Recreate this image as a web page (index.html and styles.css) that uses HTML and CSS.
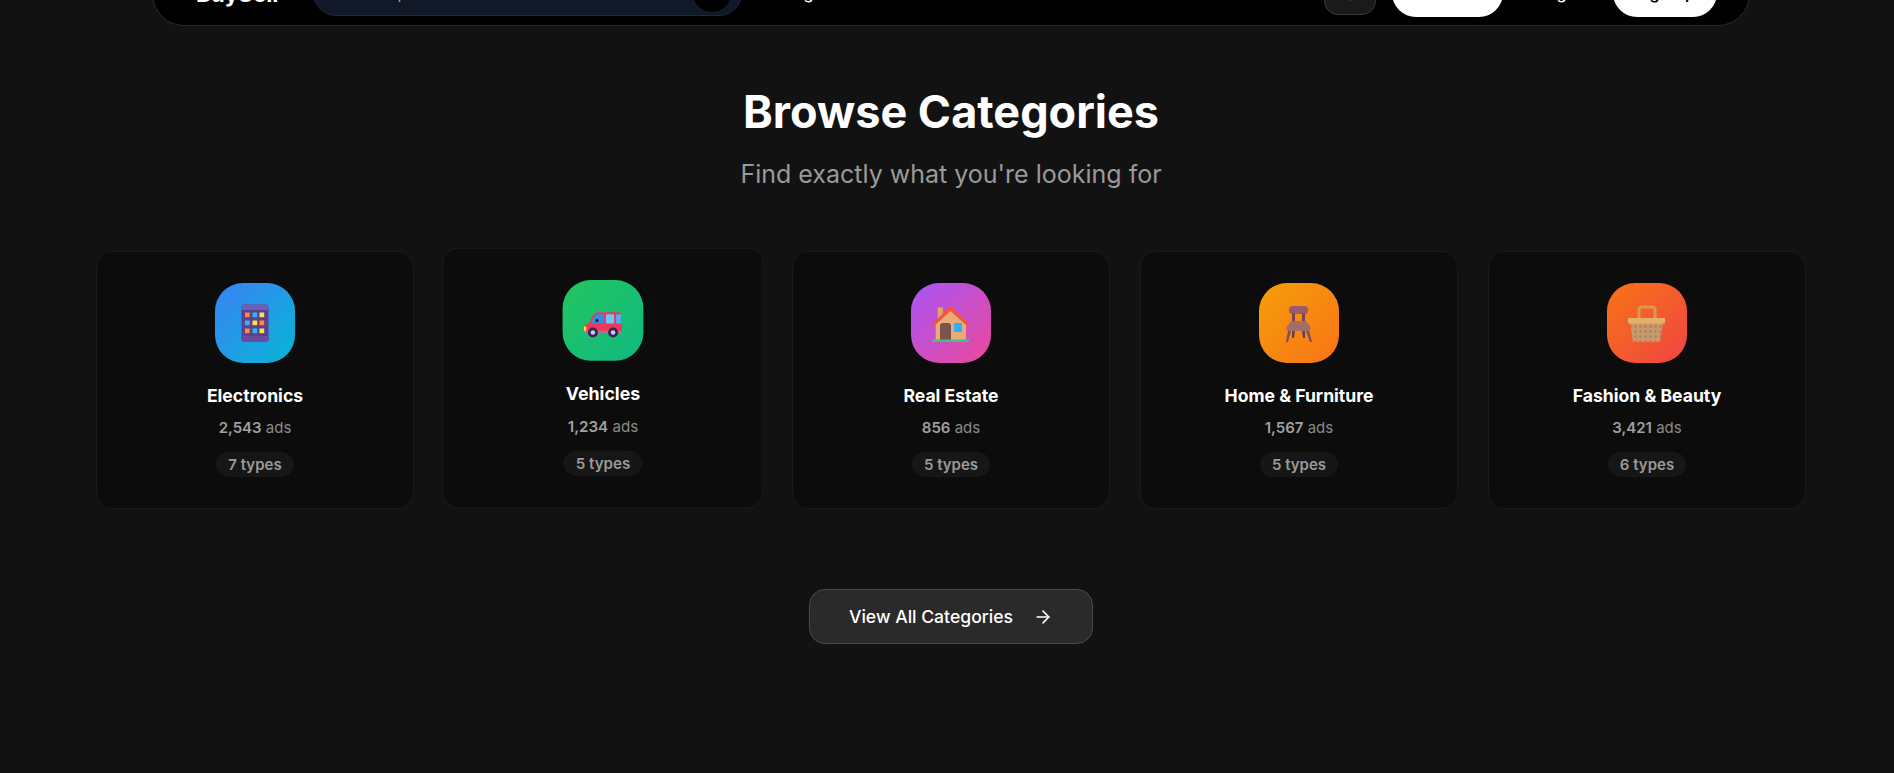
FILE: index.html
```html
<!DOCTYPE html>
<html lang="en">

<head>
    <meta charset="UTF-8">
    <title>Browse Categories</title>
    <link rel="stylesheet" href="styles.css">
</head>

<body>
    <div class="page">
        <header class="navbar">
            <span class="logo">BuySell</span>
            <div class="search">
                <span class="search-text">Search products...</span>
                <span class="search-btn">
                    <svg width="16" height="16" viewBox="0 0 24 24" fill="none" stroke="#fff" stroke-width="2" stroke-linecap="round"><circle cx="11" cy="11" r="8"/><path d="m21 21-4.3-4.3"/></svg>
                </span>
            </div>
            <a class="nav-link">Categories</a>
            <div class="nav-right">
                <span class="lang-btn">
                    <svg width="16" height="16" viewBox="0 0 24 24" fill="none" stroke="#fff" stroke-width="2" stroke-linecap="round"><path d="M12 2v20"/></svg>
                </span>
                <a class="pill post-btn">Post Ad</a>
                <a class="nav-link login">Login</a>
                <a class="pill signup-btn">Sign Up</a>
            </div>
        </header>

        <section class="categories">
            <h1>Browse Categories</h1>
            <p class="subtitle">Find exactly what you're looking for</p>

            <div class="cat-grid">
                <div class="cat-card">
                    <div class="cat-icon blue">
                        <svg width="38" height="38" viewBox="0 0 38 38">
                            <rect x="5.500" y="0.500" width="27" height="37" rx="2.500" fill="#5f3f8f"/>
                            <path d="M5.500 6V3q0-2.500 2.500-2.500h22q2.500 0 2.500 2.500v3z" fill="#6b62b5"/>
                            <path d="M5.500 32v3q0 2.500 2.500 2.500h22q2.500 0 2.500-2.500v-3z" fill="#6a4a9c"/>
                            <rect x="9" y="8.500" width="4.700" height="4.700" fill="#ff8a3c"/>
                            <rect x="16.500" y="8.500" width="4.700" height="4.700" fill="#2bb8f0"/>
                            <rect x="23.500" y="8.500" width="4.700" height="4.700" fill="#ffe14d"/>
                            <rect x="9" y="16.500" width="4.700" height="4.700" fill="#2bb8f0"/>
                            <rect x="16.500" y="16.500" width="4.700" height="4.700" fill="#ffe14d"/>
                            <rect x="23.500" y="16.500" width="4.700" height="4.700" fill="#ff8a3c"/>
                            <rect x="9" y="24.500" width="4.700" height="4.700" fill="#ff8a3c"/>
                            <rect x="16.500" y="24.500" width="4.700" height="4.700" fill="#2bb8f0"/>
                            <rect x="23.500" y="24.500" width="4.700" height="4.700" fill="#ffe14d"/>
                        </svg>
                    </div>
                    <h3>Electronics</h3>
                    <p class="cat-count"><b>2,543</b> ads</p>
                    <span class="cat-types">7 types</span>
                </div>

                <div class="cat-card hovered">
                    <div class="cat-icon green">
                        <svg width="38" height="38" viewBox="0 0 38 38">
                            <path d="M14 11H35q2 0 2.300 3L38 30H0V26q1-3 5-4l4-8q2-3 5-3z" fill="#f0375a"/>
                            <path d="M11.500 13H20V22H7z" fill="#2f8fe0"/>
                            <rect x="22" y="13" width="8" height="9" rx="1" fill="#6cc8fb"/>
                            <rect x="32" y="13" width="5" height="9" fill="#4db4f0"/>
                            <circle cx="13" cy="19" r="1.700" fill="#2a2050"/>
                            <rect x="0" y="25" width="2.500" height="5" fill="#ffd83d"/>
                            <rect x="1" y="29" width="36" height="3" fill="#b0708c"/>
                            <circle cx="9" cy="31" r="5" fill="#3a2456"/>
                            <circle cx="9" cy="31" r="2.200" fill="#d9c6ee"/>
                            <circle cx="29" cy="31" r="5" fill="#3a2456"/>
                            <circle cx="29" cy="31" r="2.200" fill="#d9c6ee"/>
                        </svg>
                    </div>
                    <h3>Vehicles</h3>
                    <p class="cat-count"><b>1,234</b> ads</p>
                    <span class="cat-types">5 types</span>
                </div>

                <div class="cat-card">
                    <div class="cat-icon purple">
                        <svg width="38" height="38" viewBox="0 0 38 38">
                            <rect x="5.700" y="3.500" width="5.300" height="14" fill="#dba56c"/>
                            <path d="M18.500 4 34 19v17H3.700V19z" fill="#e9ac78"/>
                            <path d="M18.500 2 37 20l-1.500 2.500L18.500 7 1.500 22.500 0 20z" fill="#f1553b"/>
                            <path d="M8 36V22q0-3 3-3h5q3 0 3 3v14z" fill="#7b5350"/>
                            <rect x="22" y="19" width="8" height="9" rx="1" fill="#36aef5"/>
                            <rect x="0" y="35.500" width="37" height="2.500" fill="#3fc47f"/>
                        </svg>
                    </div>
                    <h3>Real Estate</h3>
                    <p class="cat-count"><b>856</b> ads</p>
                    <span class="cat-types">5 types</span>
                </div>

                <div class="cat-card">
                    <div class="cat-icon orange">
                        <svg width="38" height="38" viewBox="0 0 38 38">
                            <rect x="9" y="2" width="19" height="8" rx="3.500" fill="#9a5c66"/>
                            <rect x="12" y="9" width="3" height="10" fill="#7c4450"/>
                            <rect x="22" y="9" width="3" height="10" fill="#7c4450"/>
                            <path d="M11 17h15l5 7-2 3H8l-2-3z" fill="#a36e66"/>
                            <path d="M8 27h3L8 38H6zM26 27h3l3 11h-2z" fill="#7f4a63"/>
                            <path d="M12 27h3l-1 7h-2zM22 27h3v7h-2z" fill="#6a3c52"/>
                        </svg>
                    </div>
                    <h3>Home &amp; Furniture</h3>
                    <p class="cat-count"><b>1,567</b> ads</p>
                    <span class="cat-types">5 types</span>
                </div>

                <div class="cat-card">
                    <div class="cat-icon red">
                        <svg width="38" height="38" viewBox="0 0 38 38">
                            <defs>
                                <pattern id="weave" width="5" height="5" patternUnits="userSpaceOnUse">
                                    <rect width="5" height="5" fill="#c99a6c"/>
                                    <circle cx="2.500" cy="2.500" r="1.500" fill="#b5845a"/>
                                </pattern>
                            </defs>
                            <path d="M11 15V6q0-3 3-3h10q3 0 3 3v9" fill="none" stroke="#d99a50" stroke-width="3"/>
                            <path d="M2 19h33l-3 19H5z" fill="url(#weave)"/>
                            <rect x="0" y="14" width="37" height="5.500" rx="1" fill="#e6b06a"/>
                        </svg>
                    </div>
                    <h3>Fashion &amp; Beauty</h3>
                    <p class="cat-count"><b>3,421</b> ads</p>
                    <span class="cat-types">6 types</span>
                </div>
            </div>

            <div class="view-all">
                <a class="view-all-btn">
                    View All Categories
                    <svg width="20" height="20" viewBox="0 0 24 24" fill="none" stroke="currentColor" stroke-width="2" stroke-linecap="round" stroke-linejoin="round"><path d="M5 12h14"/><path d="m12 5 7 7-7 7"/></svg>
                </a>
            </div>
        </section>
    </div>
</body>

</html>
```

FILE: styles.css
```css
* {
    box-sizing: border-box;
}

html,
body {
    margin: 0;
    height: 100%;
    overflow: hidden;
    background: #121212;
}

body {
    font-family: Inter, "Liberation Sans", sans-serif;
    color: #fff;
}

.page {
    padding-left: 8px;
}

.navbar {
    display: flex;
    align-items: center;
    width: 1598px;
    height: 66px;
    margin: -40px auto 0;
    padding: 0 32px 0 43px;
    background: #000;
    border: 1px solid #2a2a2a;
    border-radius: 32px;
}

.logo {
    width: 117px;
    font-size: 22.4px;
    font-weight: 700;
}

.search {
    display: flex;
    align-items: center;
    justify-content: space-between;
    width: 429px;
    height: 46px;
    padding: 0 10px 0 26px;
    background: #111827;
    border: 1px solid #1f2937;
    border-radius: 23px;
    font-size: 16px;
    color: #9ca3af;
}

.search-btn {
    display: flex;
    align-items: center;
    justify-content: center;
    width: 38px;
    height: 38px;
    background: #000;
    border-radius: 50%;
}

.nav-link {
    font-size: 16px;
    font-weight: 500;
    color: #fff;
}

.navbar > .nav-link {
    margin-left: 26px;
}

.nav-right {
    display: flex;
    align-items: center;
    margin-left: auto;
}

.lang-btn {
    display: flex;
    align-items: center;
    justify-content: center;
    width: 52px;
    height: 44px;
    background: #1a1a1a;
    border: 1px solid #3a3a3a;
    border-radius: 14px;
}

.pill {
    display: flex;
    align-items: center;
    justify-content: center;
    height: 48px;
    background: #fff;
    color: #000;
    font-size: 16px;
    font-weight: 600;
    border-radius: 24px;
}

.post-btn {
    width: 111px;
    margin-left: 16px;
}

.login {
    margin-left: 35px;
}

.signup-btn {
    width: 104px;
    margin-left: 33px;
}

.categories {
    text-align: center;
}

h1 {
    margin: 59px 0 0;
    font-size: 45px;
    line-height: 54px;
    font-weight: 700;
}

.subtitle {
    margin: 19px 0 0;
    font-size: 25px;
    line-height: 32px;
    color: #9a9a9a;
}

.cat-grid {
    display: grid;
    grid-template-columns: repeat(5, 1fr);
    gap: 30px;
    width: 1710px;
    margin: 61px auto 0;
}

.cat-card {
    display: flex;
    flex-direction: column;
    align-items: center;
    height: 258px;
    padding: 31px 16px 0;
    background: #0c0c0c;
    border: 1px solid #1a1a1a;
    border-radius: 16px;
}

.cat-card.hovered {
    transform: translateY(-2px) scale(1.01);
}

.cat-icon {
    display: flex;
    align-items: center;
    justify-content: center;
    width: 80px;
    height: 80px;
    border-radius: 28px;
}

.blue {
    background: linear-gradient(135deg, #3b82f6, #06b6d4);
}

.green {
    background: linear-gradient(135deg, #22c55e, #10b981);
}

.purple {
    background: linear-gradient(135deg, #a855f7, #ec4899);
}

.orange {
    background: linear-gradient(135deg, #f59e0b, #f97316);
}

.red {
    background: linear-gradient(135deg, #f97316, #ef4444);
}

.cat-card h3 {
    margin: 21px 0 0;
    font-size: 17.6px;
    line-height: 24px;
    font-weight: 700;
}

.cat-count {
    margin: 9px 0 0;
    font-size: 15px;
    line-height: 22px;
    color: #8a8a8a;
}

.cat-count b {
    font-weight: 600;
    color: #a0a0a0;
}

.cat-types {
    margin-top: 13px;
    padding: 0 12px;
    height: 25px;
    line-height: 25px;
    font-size: 15px;
    font-weight: 600;
    color: #9a9a9a;
    background: #161616;
    border-radius: 13px;
}

.view-all {
    margin-top: 80px;
}

.view-all-btn {
    display: inline-flex;
    align-items: center;
    gap: 20px;
    height: 55px;
    padding: 0 39px;
    font-size: 17.6px;
    font-weight: 500;
    color: #fff;
    background: #2a2a2a;
    border: 1px solid #4a4a4a;
    border-radius: 16px;
}
```
